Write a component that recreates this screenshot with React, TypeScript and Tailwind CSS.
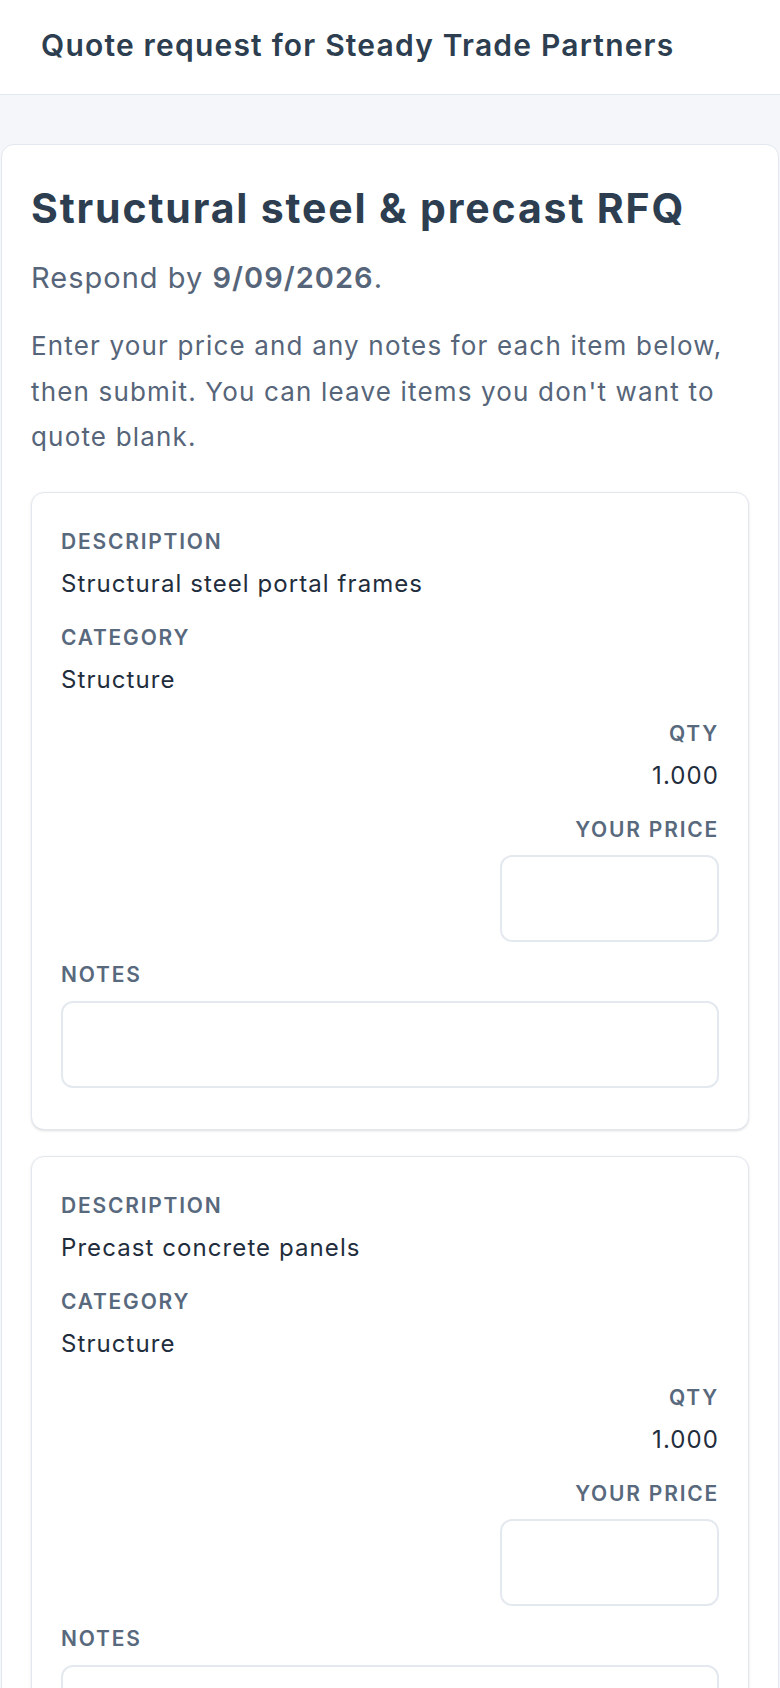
const items = [
  { description: 'Structural steel portal frames', category: 'Structure', qty: '1.000' },
  { description: 'Precast concrete panels', category: 'Structure', qty: '1.000' },
]

function Label({ children }: { children: React.ReactNode }) {
  return (
    <div className="text-[21px] font-semibold uppercase leading-[26px] tracking-[0.085em] text-[#58697d]">{children}</div>
  )
}

function Field({ label, value, right }: { label: string; value: string; right?: boolean }) {
  return (
    <div className={right ? 'text-right' : ''}>
      <Label>{label}</Label>
      <div className="mt-[12px] text-[24px] leading-[34px] tracking-[0.045em] text-[#1f2d3d]">{value}</div>
    </div>
  )
}

function ItemCard({ item }: { item: (typeof items)[number] }) {
  return (
    <div className="rounded-[13px] border border-[#e2e8f0] bg-white px-[29px] pb-[41px] pt-[36px] shadow-sm">
      <div className="flex flex-col gap-[24px]">
        <Field label="Description" value={item.description} />
        <Field label="Category" value={item.category} />
        <Field label="Qty" value={item.qty} right />
        <div className="flex flex-col items-end">
          <Label>Your price</Label>
          <input
            type="text"
            className="mt-[12px] h-[87px] w-[219px] rounded-[12px] border-2 border-[#e4e9ef] bg-white px-4 text-[24px] outline-none"
          />
        </div>
      </div>
      <div className="mt-[20px]">
        <Label>Notes</Label>
      </div>
      <input
        type="text"
        className="mt-[13px] block h-[87px] w-full rounded-[12px] border-2 border-[#e4e9ef] bg-white px-4 text-[24px] outline-none"
      />
    </div>
  )
}

export default function App() {
  return (
    <div className="min-h-screen bg-[#f4f6f9] font-['Inter',_sans-serif]">
      <header className="flex h-[95px] items-center border-b border-[#e2e8f0] bg-white px-[41px] pb-[3px]">
        <h1 className="text-[30px] font-semibold tracking-[0.04em] text-[#2c3e50]">Quote request for Steady Trade Partners</h1>
      </header>

      <main className="px-px pt-[49px]">
        <div className="rounded-t-[13px] border border-[#e2e8f0] bg-white px-[29px] pb-10 pt-[37px]">
          <h2 className="text-[41px] font-bold leading-[52px] tracking-[0.045em] text-[#2c3e50]">Structural steel &amp; precast RFQ</h2>
          <p className="mt-[22px] text-[29px] leading-[44px] tracking-[0.035em] text-[#566579]">
            Respond by <span className="font-semibold">9/09/2026</span>.
          </p>
          <p className="mt-[23px] text-[26px] leading-[45.5px] tracking-[0.045em] text-[#566579]">
            Enter your price and any notes for each item below, then submit. You can leave items you don't want to quote blank.
          </p>

          <div className="mt-[32px] flex flex-col gap-[26px]">
            {items.map((item) => (
              <ItemCard key={item.description} item={item} />
            ))}
          </div>
        </div>
      </main>
    </div>
  )
}
